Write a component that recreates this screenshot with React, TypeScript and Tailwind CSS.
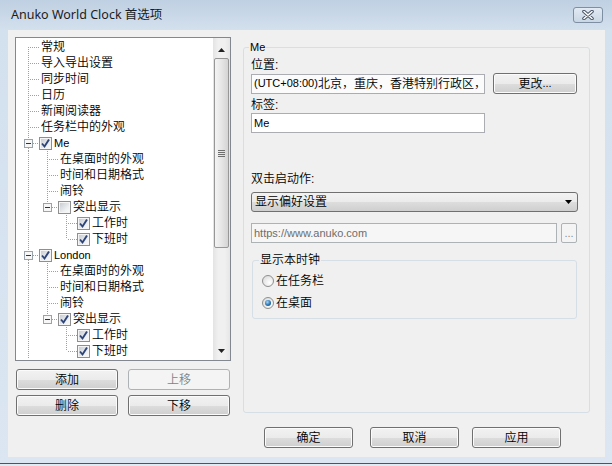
import React from 'react';

type Row = {
  l: number;
  t: string;
  latin?: boolean;
  box?: boolean;
  check?: 'on' | 'off';
  first?: boolean;
  last?: boolean;
};

const rows: Row[] = [
  { l: 0, t: '常规', first: true },
  { l: 0, t: '导入导出设置' },
  { l: 0, t: '同步时间' },
  { l: 0, t: '日历' },
  { l: 0, t: '新闻阅读器' },
  { l: 0, t: '任务栏中的外观' },
  { l: 0, t: 'Me', latin: true, box: true, check: 'on' },
  { l: 1, t: '在桌面时的外观' },
  { l: 1, t: '时间和日期格式' },
  { l: 1, t: '闹铃' },
  { l: 1, t: '突出显示', box: true, check: 'off', last: true },
  { l: 2, t: '工作时', check: 'on' },
  { l: 2, t: '下班时', check: 'on', last: true },
  { l: 0, t: 'London', latin: true, box: true, check: 'on' },
  { l: 1, t: '在桌面时的外观' },
  { l: 1, t: '时间和日期格式' },
  { l: 1, t: '闹铃' },
  { l: 1, t: '突出显示', box: true, check: 'on', last: true },
  { l: 2, t: '工作时', check: 'on' },
  { l: 2, t: '下班时', check: 'on', last: true },
];

const dots = { stroke: '#a0a0a0', strokeDasharray: '1 1', shapeRendering: 'crispEdges' as const };

function Lines({ row }: { row: Row }) {
  const cx = 12 + 19 * row.l;
  const w = row.check ? cx + 11 : cx + 13;
  const x = cx + 0.5;
  const top = row.first ? 8 : 0;
  const bottom = row.last ? 8 : 16;
  return (
    <svg width={w} height={16} className="shrink-0">
      {row.l > 0 && <line x1={12.5} y1={0} x2={12.5} y2={16} {...dots} />}
      {row.box ? (
        <>
          <line x1={x} y1={top} x2={x} y2={4} {...dots} />
          {bottom > 12 && <line x1={x} y1={13} x2={x} y2={bottom} {...dots} />}
          <line x1={cx + 5} y1={8.5} x2={cx + 10} y2={8.5} {...dots} />
          <rect x={cx - 3.5} y={4.5} width={8} height={8} fill="#f7f7f7" stroke="#9aa2aa" shapeRendering="crispEdges" />
          <line x1={cx - 2} y1={8.5} x2={cx + 3} y2={8.5} stroke="#333" shapeRendering="crispEdges" />
        </>
      ) : (
        <>
          <line x1={x} y1={top} x2={x} y2={bottom} {...dots} />
          <line x1={cx + 2} y1={8.5} x2={cx + 11} y2={8.5} {...dots} />
        </>
      )}
    </svg>
  );
}

function Check({ on }: { on: boolean }) {
  return (
    <span className="flex h-[13px] w-[13px] shrink-0 items-center justify-center border border-[#8f8f8f] bg-[#f5f5f5]">
      <span className="relative h-[9px] w-[9px] bg-[linear-gradient(135deg,#c9cdd3,#eef0f2_70%,#f8f8f8)]">
        {on && (
          <svg width={11} height={11} viewBox="0 0 11 11" className="absolute -left-[1px] -top-[1px] overflow-visible">
            <path d="M2 5.5 L4.5 8.5 L9 1.5" fill="none" stroke="#2d4479" strokeWidth={1.9} />
          </svg>
        )}
      </span>
    </span>
  );
}

function Radio({ on }: { on: boolean }) {
  return (
    <span className="flex h-[12px] w-[12px] shrink-0 items-center justify-center rounded-full border border-[#8e8f8f] bg-[radial-gradient(circle_at_65%_65%,#ffffff,#d6d6d6)]">
      {on && (
        <span className="h-[6px] w-[6px] rounded-full bg-[radial-gradient(circle_at_40%_35%,#a6d8f6,#2a72b0_55%,#173f6a)]" />
      )}
    </span>
  );
}

function Btn({ children, className, disabled }: { children: React.ReactNode; className?: string; disabled?: boolean }) {
  return (
    <div
      className={
        disabled
          ? `flex h-[21px] items-center justify-center rounded-[3px] border border-[#adb2b5] bg-[#f4f4f4] text-[#838383] ${className ?? ''}`
          : `flex h-[21px] items-center justify-center rounded-[3px] border border-[#707070] bg-[linear-gradient(to_bottom,#f2f2f2_0%,#ebebeb_50%,#dddddd_51%,#cfcfcf_100%)] shadow-[inset_0_0_0_1px_#fbfbfb] text-black ${className ?? ''}`
      }
    >
      {children}
    </div>
  );
}

function Tree() {
  return (
    <div className="flex h-[324px] w-[216px] border border-[#828790] bg-white">
      <div className="flex-1 overflow-hidden pt-[1px]">
        {rows.map((r, i) => (
          <div key={i} className="flex h-[16px] items-center">
            <Lines row={r} />
            {r.check && <Check on={r.check === 'on'} />}
            <span className={`whitespace-nowrap leading-[16px] ${r.check ? 'ml-[2px]' : ''} ${r.latin ? 'text-[11px]' : ''}`}>{r.t}</span>
          </div>
        ))}
      </div>
      <div className="flex w-[17px] flex-col bg-[linear-gradient(to_right,#e3e3e3,#f0f0f0_30%,#f0f0f0_70%,#e6e6e6)]">
        <div className="flex h-[19px] items-center justify-center pt-[4px]">
          <svg width={7} height={4}><path d="M3.5 0 L7 4 L0 4 Z" fill="#222" /></svg>
        </div>
        <div className="flex-1">
          <div className="mx-[1px] mt-[1px] flex h-[190px] items-center justify-center rounded-[2px] border border-[#979797] bg-[linear-gradient(to_right,#f4f4f4,#e6e6e6_50%,#d4d4d4)]">
            <svg width={7} height={7}>
              <path d="M0 0.5 H7 M0 2.5 H7 M0 4.5 H7 M0 6.5 H7" stroke="#6e6e6e" strokeWidth={1} />
            </svg>
          </div>
        </div>
        <div className="flex h-[18px] items-center justify-center">
          <svg width={7} height={4}><path d="M0 0 L7 0 L3.5 4 Z" fill="#222" /></svg>
        </div>
      </div>
    </div>
  );
}

export default function App() {
  return (
    <div className="flex h-[466px] w-[612px] flex-col overflow-hidden bg-[linear-gradient(to_bottom,#bfd0e2_0px,#d3e0ee_30px,#dbe6f2_100%)] font-['Liberation_Sans','Noto_Sans_CJK_SC',sans-serif] text-[12px] font-[350] text-black">
      <div className="flex h-[30px] shrink-0 items-center justify-between pl-[11px] pr-[9px]">
        <span className="font-['Noto_Sans','Noto_Sans_CJK_SC',sans-serif] text-[12.5px] font-normal text-[#1c1c1c]">Anuko World Clock 首选项</span>
        <div className="flex h-[16px] w-[30px] items-center justify-center rounded-[3px] border border-[#7e8ea3] bg-[linear-gradient(to_bottom,#e2eaf3,#c9d6e4)]">
          <svg width={12} height={10} viewBox="0 0 12 10">
            <path d="M2 1.5 L10 8.5 M10 1.5 L2 8.5" stroke="#4b5566" strokeWidth={3.6} strokeLinecap="round" />
            <path d="M2 1.5 L10 8.5 M10 1.5 L2 8.5" stroke="#ffffff" strokeWidth={1.6} strokeLinecap="round" />
          </svg>
        </div>
      </div>

      <div className="ml-[8px] flex h-[427px] w-[597px] shrink-0 bg-[#f0f0f0] pl-[7px] pt-[7px]">
        <div className="flex w-[216px] flex-col">
          <Tree />
          <div className="mt-[8px] grid grid-cols-2 gap-x-[10px] gap-y-[5px] px-[1px]">
            <Btn>添加</Btn>
            <Btn disabled>上移</Btn>
            <Btn>删除</Btn>
            <Btn>下移</Btn>
          </div>
        </div>

        <div className="ml-[12px] mt-[2px] flex w-[347px] flex-col">
          <fieldset className="h-[374px] rounded-[3px] border border-[#d5dfe5] pl-[7px]">
            <legend className="-ml-[2px] px-[1px] text-[11px] leading-[16px]">Me</legend>
            <div className="mt-[2px] h-[16px] leading-[16px]">位置:</div>
            <div className="flex items-center">
              <div className="flex h-[20px] w-[234px] items-center overflow-hidden whitespace-nowrap border border-[#abadb3] bg-[#fbfbfb] pl-[2px]">
                <span className="text-[11px]">(UTC+08:00)</span>
                <span>北京，重庆，香港特别行政区，</span>
              </div>
              <Btn className="ml-[8px] h-[18px] w-[84px]">
                更改<span className="text-[11px]">...</span>
              </Btn>
            </div>
            <div className="mt-[4px] h-[15px] leading-[15px]">标签:</div>
            <div className="flex h-[20px] w-[234px] items-center border border-[#abadb3] bg-white pl-[2px] text-[11px]">Me</div>

            <div className="mt-[38px] h-[16px] leading-[16px]">双击启动作:</div>
            <div className="mt-[5px] flex h-[20px] w-[327px] items-center justify-between rounded-[3px] border border-[#707070] bg-[linear-gradient(to_bottom,#f2f2f2_0%,#ebebeb_50%,#dddddd_51%,#cfcfcf_100%)] pl-[3px] pr-[5px]">
              <span>显示偏好设置</span>
              <svg width={7} height={4}><path d="M0 0 L7 0 L3.5 4 Z" fill="#000" /></svg>
            </div>

            <div className="mt-[11px] flex items-center">
              <div className="flex h-[20px] w-[306px] items-center border border-[#adb2b5] bg-[#f6f6f6] pl-[2px] text-[11px] text-[#6d6d6d]">
                https://www.anuko.com
              </div>
              <div className="ml-[4px] flex h-[20px] w-[16px] items-end justify-center rounded-[2px] border border-[#adb2b5] bg-[#f4f4f4] pb-[3px] text-[11px] leading-[11px] text-[#8a8a8a]">
                ...
              </div>
            </div>

            <fieldset className="ml-[1px] mt-[9px] h-[67px] w-[325px] rounded-[3px] border border-[#d5dfe5] pl-[9px]">
              <legend className="-ml-[3px] px-[1px] leading-[16px]">显示本时钟</legend>
              <div className="mt-[5px] flex h-[16px] items-center">
                <Radio on={false} />
                <span className="ml-[2px]">在任务栏</span>
              </div>
              <div className="mt-[6px] flex h-[16px] items-center">
                <Radio on />
                <span className="ml-[2px]">在桌面</span>
              </div>
            </fieldset>
          </fieldset>

          <div className="mt-[14px] flex">
            <Btn className="ml-[21px] w-[89px]">确定</Btn>
            <Btn className="ml-[17px] w-[89px]">取消</Btn>
            <Btn className="ml-[13px] w-[89px]">应用</Btn>
          </div>
        </div>
      </div>

      <div className="h-[6px] shrink-0" />
      <div className="h-[1px] shrink-0 bg-[#4a5566]" />
      <div className="h-[2px] shrink-0 bg-[#e4eaf1]" />
    </div>
  );
}
